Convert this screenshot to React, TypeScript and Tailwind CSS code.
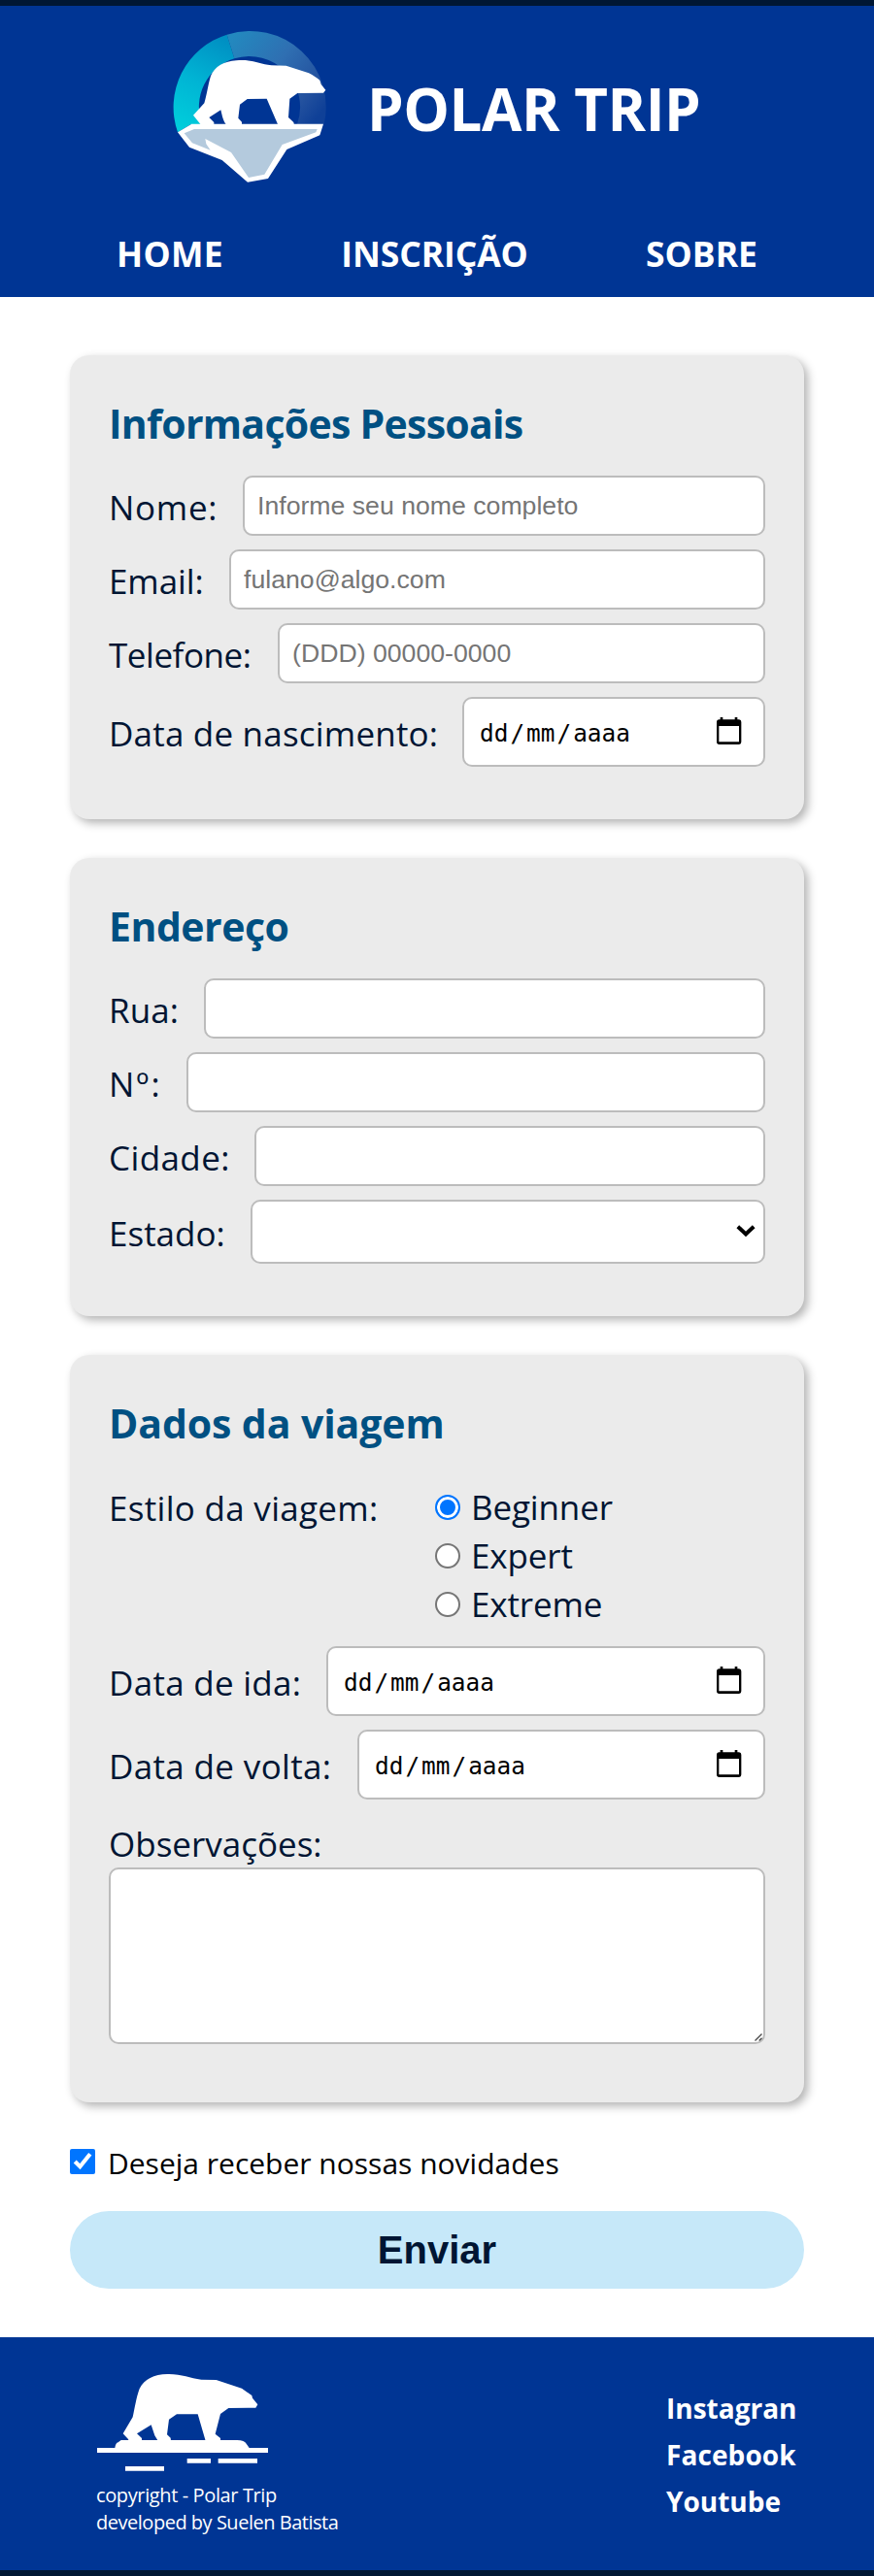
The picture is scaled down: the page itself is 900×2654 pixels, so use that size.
import type { ReactNode } from 'react';

const fieldBox =
  "shrink-0 rounded-[10px] border-2 border-[#bcbcbc] bg-white font-['Liberation_Sans',sans-serif] text-[26.67px] placeholder:text-[#757575] outline-none";
const labelText = 'whitespace-nowrap pt-[4px] text-[35px] leading-[48px] text-[#001533]';

function BearIcebergLogo() {
  return (
    <svg className="h-[180px] w-[200px] shrink-0" viewBox="0 0 600 540" aria-hidden="true">
      <defs>
        <linearGradient id="ringLeft" gradientUnits="userSpaceOnUse" x1="90" y1="340" x2="225" y2="70">
          <stop offset="0" stopColor="#00cddb" />
          <stop offset="0.5" stopColor="#00b4d4" />
          <stop offset="1" stopColor="#0090c3" />
        </linearGradient>
        <linearGradient id="ringRight" gradientUnits="userSpaceOnUse" x1="225" y1="70" x2="510" y2="290">
          <stop offset="0" stopColor="#2389bf" />
          <stop offset="0.45" stopColor="#2f6fb2" />
          <stop offset="0.8" stopColor="#24529f" />
          <stop offset="1" stopColor="#0f4097" />
        </linearGradient>
      </defs>
      <path d="M69 349A235 235 0 0 1 221 47L244 121A157 157 0 0 0 144 324L110 324Z" fill="url(#ringLeft)" />
      <path d="M221 47A235 235 0 0 1 521 324L438 324A157 157 0 0 0 244 121Z" fill="url(#ringRight)" />
      <path
        d="M117 296L151 259C158 238 162 205 171 175C183 145 213 129 250 127C302 123 320 138 358 142L404 143L474 166C488 172 499 182 508 188L512 201L526 218L519 227L439 228L415 245L411 303L427 318L429 326L379 326L344 245L284 246L261 263L256 305L267 317L267 326L220 326C209 316 206 295 202 280L166 303L181 318L181 326L141 326Z"
        fill="#fff"
      />
      <path d="M112 323L519 323L508 358L406 402L348 492L285 503L206 435L105 395L69 349Z" fill="#fff" />
      <path
        d="M120 339L500 339L496 349L392 387L337 479L288 489L234 411L154 369L157 385L170 404L114 382L89 352Z"
        fill="#b4cadd"
      />
    </svg>
  );
}

function BearFloeLogo() {
  return (
    <svg className="h-[126px] w-[177px]" viewBox="30 0 531 378" fill="#fff" aria-hidden="true">
      <path d="M110 232L140 181C146 155 151 119 161 93C176 64 205 49 247 48C291 47 316 61 352 65L398 66L477 92L508 114L510 122L526 142L520 152L436 153L411 171L395 233L411 246L411 254L365 254L341 172L276 172L252 188L246 235L257 245L258 254L218 254L208 238L197 205L153 232L168 246L168 254L128 254L126 249Z" />
      <path d="M104 252L462 252Q486 253 491 263L500 276L558 276L558 291L30 291L30 276L85 276Q87 261 95 259Z" />
      <path d="M308 309H381V323H308ZM404 309H525V323H404ZM117 333H237V347H117Z" />
    </svg>
  );
}

function CalendarIcon() {
  return (
    <svg className="mb-[2px] h-[30px] w-[27px]" viewBox="800 84 81 90" aria-hidden="true">
      <path
        fillRule="evenodd"
        d="M814 87H822V94H859V87H867V94H871Q879 94 879 102V163Q879 171 871 171H811Q803 171 803 163V102Q803 94 811 94H814ZM810 114V163H872V114Z"
      />
    </svg>
  );
}

function Card({ title, spacing, bottom, children }: { title: string; spacing: string; bottom: string; children: ReactNode }) {
  return (
    <section className={`mb-10 rounded-[20px] bg-[#ebebeb] px-10 pt-10 shadow-[4px_4px_10px_rgba(0,0,0,0.3)] ${bottom}`}>
      <h2 className={`mb-6 text-[41px] font-bold leading-[60px] text-[#005082] ${spacing}`}>{title}</h2>
      {children}
    </section>
  );
}

function Row({ label, spacing, children }: { label: string; spacing: string; children: ReactNode }) {
  return (
    <div className="flex items-center justify-between">
      <label className={`${labelText} ${spacing}`}>{label}</label>
      {children}
    </div>
  );
}

function TextField({ label, spacing, width, placeholder }: { label: string; spacing: string; width: string; placeholder?: string }) {
  return (
    <Row label={label} spacing={spacing}>
      <input className={`${fieldBox} h-[62px] px-[13px] ${width}`} placeholder={placeholder} />
    </Row>
  );
}

function DateField({ label, spacing, width }: { label: string; spacing: string; width: string }) {
  return (
    <Row label={label} spacing={spacing}>
      <div
        className={`flex h-[72px] shrink-0 items-center justify-between rounded-[10px] border-2 border-[#bcbcbc] bg-white pl-[16px] pr-[22px] ${width}`}
      >
        <div className="flex gap-[2px] pt-[4px] font-['DejaVu_Sans_Mono',monospace] text-[24.4px] leading-[32px] text-black">
          <span>dd</span>
          <span>/</span>
          <span>mm</span>
          <span>/</span>
          <span>aaaa</span>
        </div>
        <CalendarIcon />
      </div>
    </Row>
  );
}

const styles = ['Beginner', 'Expert', 'Extreme'];

export default function App() {
  return (
    <div className="h-[2654px] w-[900px] border-y-[6px] border-[#001733] bg-white font-['Open_Sans','Noto_Sans',sans-serif]">
      <header className="h-[300px] bg-[#003594] pt-[14px] text-white">
        <div className="flex items-center gap-[18px] pl-[160px]">
          <BearIcebergLogo />
          <h1 className="whitespace-nowrap pt-[3px] text-[60px] font-bold leading-[80px] tracking-[-0.45px]">POLAR TRIP</h1>
        </div>
        <nav className="mt-[31px] flex justify-between px-[120px] text-[35.5px] font-bold leading-[60px]">
          <a className="tracking-[0.3px]">HOME</a>
          <a className="tracking-[-0.1px]">INSCRIÇÃO</a>
          <a className="tracking-normal">SOBRE</a>
        </nav>
      </header>

      <form className="h-[2102px] px-[72px] pt-[60px]">
        <Card title="Informações Pessoais" spacing="tracking-[-0.72px]" bottom="pb-[54px]">
          <div className="flex flex-col gap-[14px]">
            <TextField label="Nome:" spacing="tracking-[0.7px]" width="w-[538px]" placeholder="Informe seu nome completo" />
            <TextField label="Email:" spacing="tracking-[-0.1px]" width="w-[552px]" placeholder="fulano@algo.com" />
            <TextField label="Telefone:" spacing="tracking-[-0.45px]" width="w-[502px]" placeholder="(DDD) 00000-0000" />
            <DateField label="Data de nascimento:" spacing="tracking-[0.2px]" width="w-[312px]" />
          </div>
        </Card>

        <Card title="Endereço" spacing="tracking-[-0.5px]" bottom="pb-[54px]">
          <div className="flex flex-col gap-[14px]">
            <TextField label="Rua:" spacing="tracking-[0.1px]" width="w-[578px]" />
            <TextField label="Nº:" spacing="tracking-[2px]" width="w-[596px]" />
            <TextField label="Cidade:" spacing="tracking-[0.4px]" width="w-[526px]" />
            <Row label="Estado:" spacing="tracking-normal">
              <div className="relative">
                <select className={`${fieldBox} block h-[66px] w-[530px] appearance-none`} />
                <svg className="pointer-events-none absolute right-[10px] top-[26px] h-[13px] w-[20px]" viewBox="0 0 20 13" aria-hidden="true">
                  <path d="M1.8 1.8L10 9.4L18.2 1.8" fill="none" stroke="#000" strokeWidth="4" />
                </svg>
              </div>
            </Row>
          </div>
        </Card>

        <Card title="Dados da viagem" spacing="tracking-[-0.1px]" bottom="pb-[60px]">
          <div className="flex pt-[7px]">
            <span className="w-[336px] pt-[2px] text-[35px] leading-[50px] tracking-[0.3px] text-[#001533]">Estilo da viagem:</span>
            <div className="h-[150px]">
              {styles.map((name, i) => (
                <label key={name} className="flex h-[50px] items-center gap-[11px]">
                  <input
                    type="radio"
                    name="style"
                    defaultChecked={i === 0}
                    className="mt-[2px] size-[26px] appearance-none rounded-full border-2 border-[#767676] bg-white checked:border-[#0075ff] checked:bg-[#0075ff] checked:shadow-[inset_0_0_0_3px_#fff]"
                  />
                  <span className="pt-[2px] text-[35px] leading-[48px] tracking-[-0.15px] text-[#001533]">{name}</span>
                </label>
              ))}
            </div>
          </div>
          <div className="mt-[19px] flex flex-col gap-[14px]">
            <DateField label="Data de ida:" spacing="tracking-[0.28px]" width="w-[452px]" />
            <DateField label="Data de volta:" spacing="tracking-[0.35px]" width="w-[420px]" />
          </div>
          <label className="mt-[22px] block text-[35px] leading-[48px] tracking-normal text-[#001533]">Observações:</label>
          <div className="relative h-[182px]">
            <textarea className={`${fieldBox} block h-[182px] w-full resize-none`} />
            <svg className="absolute bottom-[3px] right-[3px] size-[8px]" viewBox="0 0 8 8" aria-hidden="true">
              <path d="M0.5 7.5L7.5 0.5M4.7 7.5L7.5 4.7" stroke="#444" strokeWidth="1.3" />
            </svg>
          </div>
        </Card>

        <label className="mt-[48px] flex h-[26px] items-center gap-[13px]">
          <input type="checkbox" defaultChecked className="size-[26px]" />
          <span className="pt-[3px] text-[30px] leading-[40px] text-black">Deseja receber nossas novidades</span>
        </label>
        <button
          type="button"
          className="mt-[38px] h-[80px] w-full rounded-[40px] bg-[#c6e8f9] font-['Liberation_Sans',sans-serif] text-[40px] font-bold text-[#001533]"
        >
          Enviar
        </button>
      </form>

      <footer className="flex h-[240px] justify-between bg-[#003594] text-white">
        <div className="pl-[99px] pt-[22px] text-[20px] leading-[28px]">
          <div className="mb-[1px] pl-[1px]">
            <BearFloeLogo />
          </div>
          <p className="tracking-[-0.38px]">copyright - Polar Trip</p>
          <p className="tracking-[-0.48px]">developed by Suelen Batista</p>
        </div>
        <nav className="flex w-[214px] flex-col pt-[49px] text-[28px] font-bold leading-[48px]">
          <a className="tracking-normal">Instagran</a>
          <a className="tracking-[0.1px]">Facebook</a>
          <a>Youtube</a>
        </nav>
      </footer>
    </div>
  );
}
